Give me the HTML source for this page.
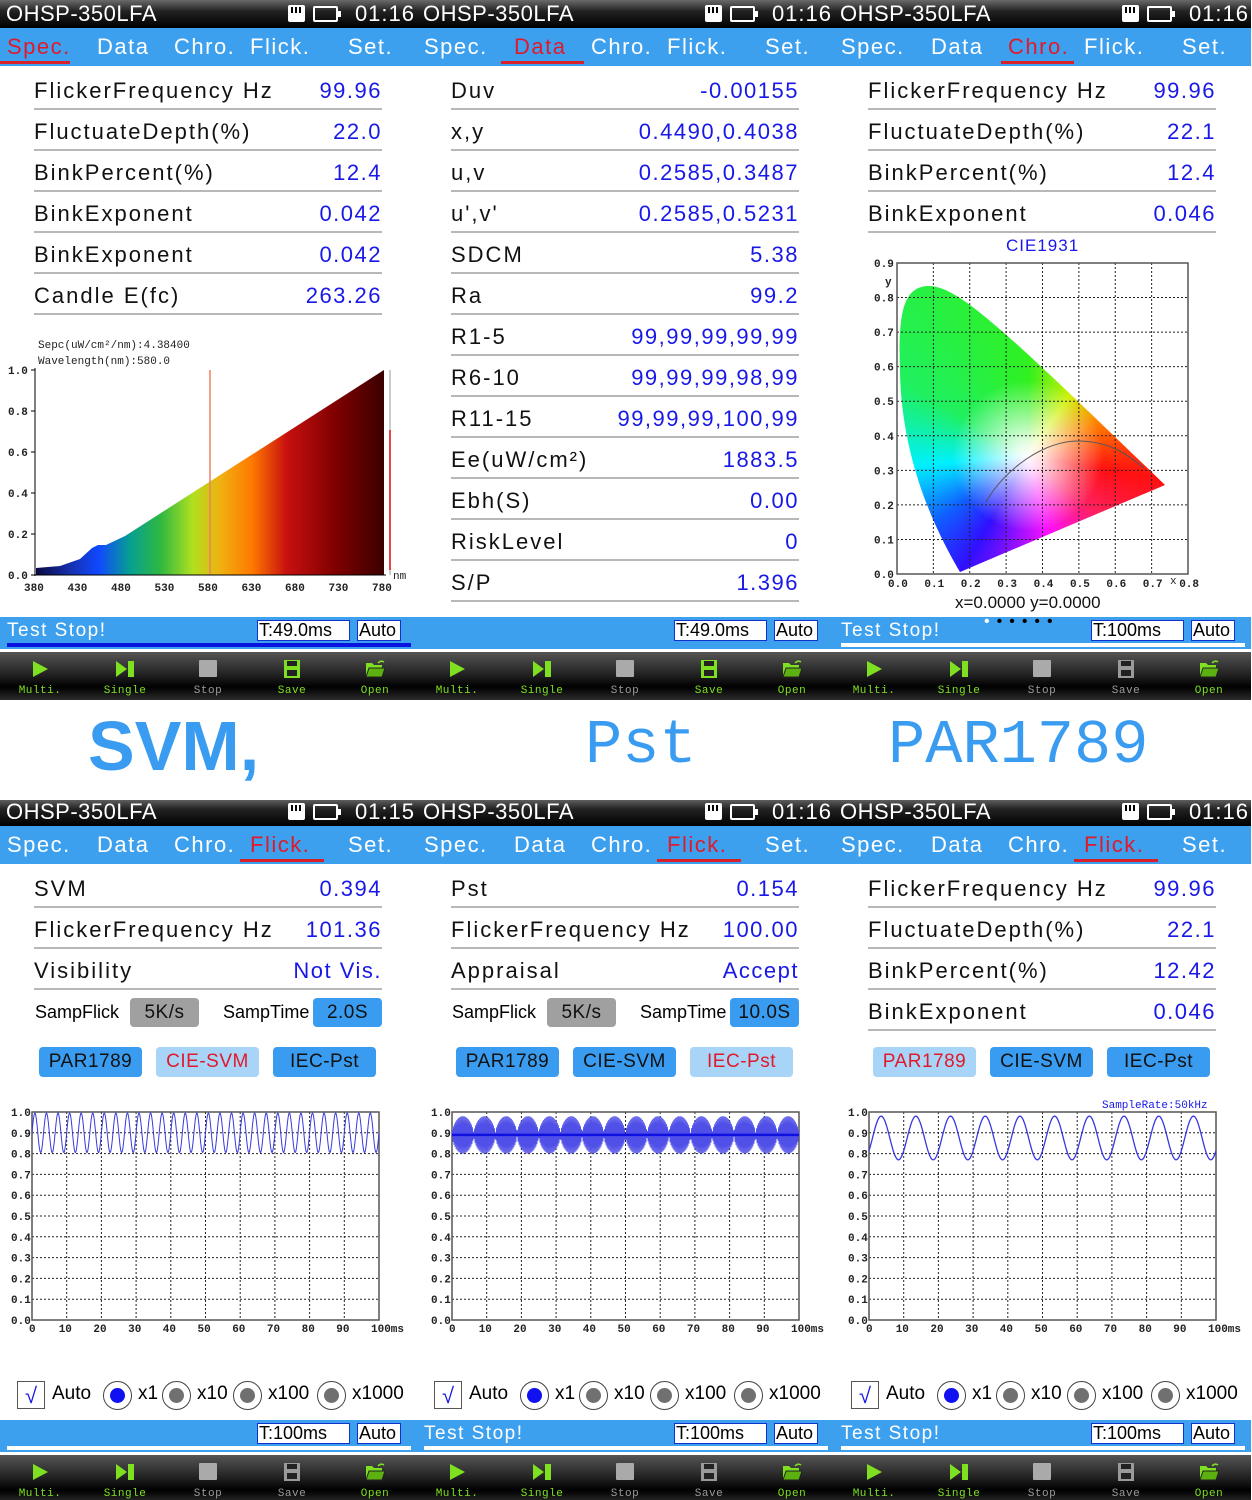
<!DOCTYPE html>
<html><head><meta charset="utf-8">
<style>
*{margin:0;padding:0;box-sizing:border-box}
body{width:1252px;height:1500px;position:relative;overflow:hidden;background:#fff;font-family:"Liberation Sans","Noto Sans CJK SC",sans-serif}
.p{position:absolute;width:417px;height:702px;overflow:hidden;background:#fff}
.sb{position:absolute;left:0;top:0;width:417px;height:28px;background:linear-gradient(#6a6a6a,#222 40%,#000);color:#fff;font-size:22px;line-height:28px;letter-spacing:0.5px}
.sb .n{position:absolute;left:6px}
.sb .t{position:absolute;right:2px;letter-spacing:1px}
.sd{position:absolute;left:288px;top:5px;width:17px;height:17px;background:#fff;border-radius:2px}
.sd:before{content:"";position:absolute;left:3px;top:2px;width:11px;height:6px;background:repeating-linear-gradient(90deg,#000 0 2px,#fff 2px 4px)}
.bt{position:absolute;left:313px;top:6px;width:25px;height:16px;border:2px solid #fff;border-radius:2px}
.bt:after{content:"";position:absolute;right:-5px;top:3px;width:3px;height:6px;background:#fff}
.tabs{position:absolute;left:0;top:28px;width:417px;height:38px;background:#3da0ee;color:#fff;font-size:22px;letter-spacing:1.5px}
.tabs span{position:absolute;top:6px}
.tabs .a{color:#e01a2a}
.ul{position:absolute;top:33px;height:3px;background:#d8202a}
.row{position:absolute;left:34px;width:348px;height:41px;border-bottom:2px solid #b8b8b8;font-size:22px;letter-spacing:2px;color:#111}
.row .l{position:absolute;left:0;top:9px;white-space:nowrap}
.row .v{position:absolute;right:0;top:9px;color:#1818e8;white-space:nowrap;letter-spacing:1.5px}
.st{position:absolute;left:0;top:617px;width:417px;height:32px;background:#3da0ee;color:#fff;font-size:19px;letter-spacing:1.5px}
.st .m{position:absolute;left:7px;top:3px}
.bx{position:absolute;top:3px;height:21px;background:#fff;border:1px solid #1030d0;color:#000;font-size:18px;line-height:19px;padding-left:1px;letter-spacing:0}
.ln{position:absolute;left:7px;top:26px;width:404px;height:4px}
.tb{position:absolute;left:0;top:652px;width:417px;height:50px;background:linear-gradient(#555,#222 45%,#000 70%,#333)}
.ic{position:absolute;top:8px;width:20px;height:18px}
.lb{position:absolute;top:33px;font-size:11px;width:60px;text-align:center;letter-spacing:0.5px;font-family:"Liberation Mono",monospace}
.g{color:#7ee020}.gr{color:#9a9a9a}
.btn{position:absolute;height:30px;border-radius:4px;font-size:19px;text-align:center;line-height:30px;letter-spacing:0.5px}
.ax{font-family:"Liberation Mono",monospace;font-size:11px;font-weight:bold;fill:#222}
</style></head><body>
<div id="root"></div>
<div style="position:absolute;left:0;top:700px;width:1252px;height:100px;background:#fff">
<div style="position:absolute;left:88px;top:6px;font-size:70px;font-weight:bold;color:#3a9cf0;font-family:'Liberation Sans',sans-serif">SVM,</div>
<div style="position:absolute;left:585px;top:10px;font-size:62px;color:#3a9cf0;font-family:'Liberation Mono',monospace">Pst</div>
<div style="position:absolute;left:888px;top:10px;font-size:62px;color:#3a9cf0;font-family:'Liberation Mono',monospace">PAR1789</div>
</div>
<script>
var R=document.getElementById('root');
function panel(x,y,tabIdx,time){
 var p=document.createElement('div');p.className='p';p.style.left=x+'px';p.style.top=y+'px';
 var tx=[7,97,174,250,348],tn=['Spec.','Data','Chro.','Flick.','Set.'],ux=[[0,70],[84,167],[167,240],[240,324],[0,0]];
 var h='<div class="sb"><span class="n">OHSP-350LFA</span><div class="sd"></div><div class="bt"></div><span class="t">'+time+'</span></div><div class="tabs">';
 for(var i=0;i<5;i++)h+='<span'+(i==tabIdx?' class="a"':'')+' style="left:'+tx[i]+'px">'+tn[i]+'</span>';
 h+='<div class="ul" style="left:'+ux[tabIdx][0]+'px;width:'+(ux[tabIdx][1]-ux[tabIdx][0])+'px"></div></div>';
 p.innerHTML=h;R.appendChild(p);return p;
}
function add(p,h){p.insertAdjacentHTML('beforeend',h)}
function rows(p,top,arr){var h='';arr.forEach(function(r,i){h+='<div class="row" style="top:'+(top+i*41)+'px"><span class="l">'+r[0]+'</span><span class="v">'+r[1]+'</span></div>'});add(p,h)}
function status(p,msg,t,lineCol,dots,dy){
 dy=dy||0;
 var h='<div class="st" style="top:'+(617+dy)+'px">'+(msg?'<span class="m">'+msg+'</span>':'')+(dots?'<span style="position:absolute;left:150px;top:-4px;font-size:16px;letter-spacing:7px;color:#000"><span style="color:#fff">•</span>•••••</span>':'')+
 '<div class="bx" style="left:257px;width:93px">'+t+'</div><div class="bx" style="left:357px;width:44px">Auto</div><div class="ln" style="background:'+lineCol+'"></div></div>';
 add(p,h);
}
function toolbar(p,saveGreen,dy){
 dy=dy||0;
 var cx=[40,125,208,292,375],lbs=['Multi.','Single','Stop','Save','Open'];
 var sc=saveGreen?'#7ee020':'#9a9a9a';
 var ic=[
 '<svg class="ic" viewBox="0 0 20 18"><path d="M3 1 L18 9 L3 17Z" fill="#7ee020"/></svg>',
 '<svg class="ic" viewBox="0 0 20 18"><path d="M1 1 L12 9 L1 17Z M13 1 h6 v16 h-6Z" fill="#7ee020"/></svg>',
 '<svg class="ic" viewBox="0 0 20 18"><rect x="1" y="0" width="18" height="17" rx="1" fill="#aaa"/></svg>',
 '<svg class="ic" viewBox="0 0 20 18"><path d="M2 0 h16 v18 h-16Z" fill="'+sc+'"/><rect x="5" y="1" width="10" height="5" fill="#222"/><rect x="5" y="10" width="10" height="6" fill="#222"/></svg>',
 '<svg class="ic" viewBox="0 0 20 18"><path d="M1 3 h6 l2 2 h8 v12 h-16Z" fill="#7ee020"/><path d="M4 8 h16 l-3 9 h-16Z" fill="#5cb010" stroke="#222" stroke-width="1"/><path d="M13 3 q3 -3 6 -1" stroke="#7ee020" fill="none" stroke-width="1.5"/></svg>'];
 var h='<div class="tb" style="top:'+(652+dy)+'px">';
 for(var i=0;i<5;i++){var c=(i==2)?'gr':(i==3&&!saveGreen)?'gr':'g';h+='<div style="position:absolute;left:'+(cx[i]-10)+'px;top:0">'+ic[i]+'</div><div class="lb '+c+'" style="left:'+(cx[i]-30)+'px">'+lbs[i]+'</div>'}
 add(p,h+'</div>');
}
function gridSvg(x0,y0,w,hgt,nx,ny){var s='';for(var i=1;i<nx;i++){var xx=x0+w*i/nx;s+='<line x1="'+xx+'" y1="'+y0+'" x2="'+xx+'" y2="'+(y0+hgt)+'" stroke="#222" stroke-dasharray="2,2" stroke-width="1"/>'}for(var j=1;j<ny;j++){var yy=y0+hgt*j/ny;s+='<line x1="'+x0+'" y1="'+yy+'" x2="'+(x0+w)+'" y2="'+yy+'" stroke="#222" stroke-dasharray="2,2" stroke-width="1"/>'}return s}

/* ===== Panel 1: Spec ===== */
var p1=panel(0,0,0,'01:16');
rows(p1,69,[['FlickerFrequency Hz','99.96'],['FluctuateDepth(%)','22.0'],['BinkPercent(%)','12.4'],['BinkExponent','0.042'],['BinkExponent','0.042'],['Candle E(fc)','263.26']]);
(function(){
 var s='<svg style="position:absolute;left:0;top:330px" width="417" height="270"><defs><linearGradient id="sp" x1="36" x2="384" gradientUnits="userSpaceOnUse">'+
 '<stop offset="0" stop-color="#0a0a40"/><stop offset="0.1" stop-color="#1530b0"/><stop offset="0.18" stop-color="#1048ff"/><stop offset="0.27" stop-color="#05a090"/><stop offset="0.36" stop-color="#30b840"/><stop offset="0.45" stop-color="#b0e020"/><stop offset="0.53" stop-color="#f0b010"/><stop offset="0.62" stop-color="#ff7a00"/><stop offset="0.72" stop-color="#c81010"/><stop offset="0.86" stop-color="#800000"/><stop offset="1" stop-color="#3a0000"/></linearGradient></defs>'+
 '<path d="M36 245 L36 238 L60 236 L80 229 L92 218 L98 215 L106 215 L125 206 L384 40 L384 245Z" fill="url(#sp)"/>'+
 '<line x1="210" y1="40" x2="210" y2="245" stroke="#f08060" stroke-width="1.5"/>'+
 '<line x1="390" y1="40" x2="390" y2="245" stroke="#bbb" stroke-width="1.5"/><line x1="390" y1="100" x2="390" y2="240" stroke="#f01010" stroke-width="1.5"/>'+
 '<line x1="35" y1="38" x2="35" y2="246" stroke="#000"/><line x1="35" y1="245" x2="386" y2="245" stroke="#000"/>';
 var yl=['1.0','0.8','0.6','0.4','0.2','0.0'];for(var i=0;i<6;i++){var yy=40+i*41;s+='<text class="ax" x="8" y="'+(yy+4)+'">'+yl[i]+'</text><line x1="31" y1="'+yy+'" x2="35" y2="'+yy+'" stroke="#000"/>'}
 var xl=['380','430','480','530','580','630','680','730','780'];for(var i=0;i<9;i++){s+='<text class="ax" x="'+(24+i*43.5)+'" y="261">'+xl[i]+'</text>'}
 s+='<text class="ax" x="393" y="249" style="font-weight:normal">nm</text>';
 s+='<text x="38" y="18" style="font-family:Liberation Mono,monospace;font-size:11px" fill="#222">Sepc(uW/cm²/nm):4.38400</text><text x="38" y="34" style="font-family:Liberation Mono,monospace;font-size:11px" fill="#222">Wavelength(nm):580.0</text></svg>';
 add(p1,s);
})();
status(p1,'Test Stop!','T:49.0ms','#0a14e0');toolbar(p1,true);

/* ===== Panel 2: Data ===== */
var p2=panel(417,0,1,'01:16');
rows(p2,69,[['Duv','-0.00155'],['x,y','0.4490,0.4038'],['u,v','0.2585,0.3487'],["u',v'",'0.2585,0.5231'],['SDCM','5.38'],['Ra','99.2'],['R1-5','99,99,99,99,99'],['R6-10','99,99,99,98,99'],['R11-15','99,99,99,100,99'],['Ee(uW/cm²)','1883.5'],['Ebh(S)','0.00'],['RiskLevel','0'],['S/P','1.396']]);
status(p2,'','T:49.0ms','#3da0ee');toolbar(p2,true);

/* ===== Panel 3: Chro ===== */
var p3=panel(834,0,2,'01:16');
rows(p3,69,[['FlickerFrequency Hz','99.96'],['FluctuateDepth(%)','22.1'],['BinkPercent(%)','12.4'],['BinkExponent','0.046']]);
(function(){
 var s='<div style="position:absolute;left:172px;top:236px;font-size:17px;color:#1818e8;letter-spacing:1px">CIE1931</div>';
 s+='<div style="position:absolute;left:63px;top:263px;width:291px;height:311px;clip-path:path(\'M63 309 C40 270 5 200 3 110 C1 50 6 25 30 23 C60 22 100 60 268 222 Z\');background:radial-gradient(circle at 45% 62%,#fff 0,rgba(255,255,255,0.85) 6%,rgba(255,255,255,0) 30%),conic-gradient(from 0deg at 45% 62%,#30f020 0deg,#d0f000 35deg,#ff8000 65deg,#ff1010 100deg,#ff2060 130deg,#ff10ff 165deg,#3010ff 210deg,#1060ff 235deg,#00f0ff 265deg,#20f060 300deg,#30f020 360deg)"></div>';
 s+='<svg style="position:absolute;left:0;top:240px" width="418" height="380">'+gridSvg(63,23,291,311,8,9)+'<rect x="63" y="23" width="291" height="311" fill="none" stroke="#555" stroke-width="1.5"/>'+
 '<path d="M152 262 C170 230 210 200 246 201 C275 202 290 212 310 228" stroke="#555" fill="none" stroke-width="1"/>';
 var yl=['0.9','0.8','0.7','0.6','0.5','0.4','0.3','0.2','0.1','0.0'];for(var i=0;i<10;i++){var yy=23+i*34.55;s+='<text class="ax" x="40" y="'+(yy+4)+'">'+yl[i]+'</text>'}
 s+='<text class="ax" x="51" y="45">y</text>';
 var xl=['0.0','0.1','0.2','0.3','0.4','0.5','0.6','0.7','0.8'];for(var i=0;i<9;i++){s+='<text class="ax" x="'+(54+i*36.4)+'" y="347">'+xl[i]+'</text>'}
 s+='<text class="ax" x="336" y="344" style="font-weight:normal">x</text>';
 s+='<text x="121" y="368" style="font-family:Liberation Sans,sans-serif;font-size:17px" fill="#111">x=0.0000  y=0.0000</text></svg>';
 add(p3,s);
})();
status(p3,'Test Stop!','T:100ms','#ffffff',true);toolbar(p3,false);

/* ===== Bottom panels ===== */
function flickChart(p,x0,kind){
 var y0=314,w=347,hg=208;
 var s='<svg style="position:absolute;left:0;top:0" width="417" height="560">'+gridSvg(x0,y0,w,hg,10,10)+'<rect x="'+x0+'" y="'+y0+'" width="'+w+'" height="'+hg+'" fill="none" stroke="#555" stroke-width="1.5"/>';
 var yl=['1.0','0.9','0.8','0.7','0.6','0.5','0.4','0.3','0.2','0.1','0.0'];for(var i=0;i<11;i++){s+='<text class="ax" x="'+(x0-21)+'" y="'+(y0+i*20.8+4)+'">'+yl[i]+'</text>'}
 var xl=['0','10','20','30','40','50','60','70','80','90','100ms'];for(var i=0;i<11;i++){s+='<text class="ax" x="'+(x0-3+i*34.7-(i>0?5:0))+'" y="'+(y0+hg+12)+'">'+xl[i]+'</text>'}
 var d='';function Y(v){return y0+(1-v)*hg}
 if(kind==1){for(var i=0;i<=w*2;i++){var xx=x0+i/2;var v=0.9+0.095*Math.sin(i/2/w*2*Math.PI*30);d+=(i?'L':'M')+xx.toFixed(1)+' '+Y(v).toFixed(1)}s+='<path d="'+d+'" stroke="#3838e0" fill="none" stroke-width="1"/>'}
 if(kind==2){for(var i=0;i<=w*2;i++){var xx=x0+i/2;var t=i/2/w;var env=Math.sqrt(Math.abs(Math.sin(t*Math.PI*16)));var v=0.89+0.09*env*(i%2?1:-1);d+=(i?'L':'M')+xx.toFixed(1)+' '+Y(v).toFixed(1)}s+='<path d="'+d+'" stroke="#5050e8" fill="none" stroke-width="0.8"/><line x1="'+x0+'" y1="'+Y(0.89)+'" x2="'+(x0+w)+'" y2="'+Y(0.89)+'" stroke="#1010e0" stroke-width="2.5"/>'}
 if(kind==3){for(var i=0;i<=w;i++){var xx=x0+i;var v=0.875+0.105*Math.sin(i/w*2*Math.PI*10-0.2*Math.PI);d+=(i?'L':'M')+xx.toFixed(1)+' '+Y(v).toFixed(1)}s+='<path d="'+d+'" stroke="#3838e0" fill="none" stroke-width="1.3"/><text x="268" y="310" style="font-family:Liberation Mono,monospace;font-size:11px" fill="#1818e8">SampleRate:50kHz</text>'}
 add(p,s+'</svg>');
}
function radioRow(p){
 var T=583;
 var h='<div style="position:absolute;left:17px;top:'+T+'px;width:28px;height:28px;border:1px solid #555;color:#1818e8;font-size:22px;text-align:center;line-height:28px">√</div><span style="position:absolute;left:52px;top:'+(T+2)+'px;font-size:19px">Auto</span>';
 var xs=[[103,'x1',1],[162,'x10',0],[233,'x100',0],[317,'x1000',0]];
 xs.forEach(function(r){h+='<div style="position:absolute;left:'+r[0]+'px;top:'+T+'px;width:29px;height:29px;border:1px solid #444;border-radius:50%"><div style="position:absolute;left:6px;top:6px;width:15px;height:15px;border-radius:50%;background:'+(r[2]?'#1010f0':'#707070')+'"></div></div><span style="position:absolute;left:'+(r[0]+35)+'px;top:'+(T+2)+'px;font-size:19px">'+r[1]+'</span>'});
 add(p,h);
}
function btns(p,act){
 var n=['PAR1789','CIE-SVM','IEC-Pst'],xs=[39,156,273],h='';
 for(var i=0;i<3;i++){h+='<div class="btn" style="left:'+xs[i]+'px;top:249px;width:103px;background:'+(i==act?'#a8d4f8':'#3a9cf0')+';color:'+(i==act?'#e01a2a':'#111')+'">'+n[i]+'</div>'}
 add(p,h);
}
function samp(p,t){
 add(p,'<span style="position:absolute;left:35px;top:204px;font-size:18px">SampFlick</span><div class="btn" style="left:130px;top:200px;width:69px;height:29px;line-height:29px;background:#a0a0a0;color:#111">5K/s</div><span style="position:absolute;left:223px;top:204px;font-size:18px">SampTime</span><div class="btn" style="left:313px;top:200px;width:69px;height:29px;line-height:29px;background:#3a9cf0;color:#111">'+t+'</div>');
}
var B=798;
var q1=panel(0,B,3,'01:15');
rows(q1,69,[['SVM','0.394'],['FlickerFrequency Hz','101.36'],['Visibility','Not Vis.']]);
samp(q1,'2.0S');btns(q1,1);flickChart(q1,32,1);radioRow(q1);status(q1,'','T:100ms','#ffffff',false,5);toolbar(q1,false,5);
var q2=panel(417,B,3,'01:16');
rows(q2,69,[['Pst','0.154'],['FlickerFrequency Hz','100.00'],['Appraisal','Accept']]);
samp(q2,'10.0S');btns(q2,2);flickChart(q2,35,2);radioRow(q2);status(q2,'Test Stop!','T:100ms','#ffffff',false,5);toolbar(q2,false,5);
var q3=panel(834,B,3,'01:16');
rows(q3,69,[['FlickerFrequency Hz','99.96'],['FluctuateDepth(%)','22.1'],['BinkPercent(%)','12.42'],['BinkExponent','0.046']]);
btns(q3,0);flickChart(q3,35,3);radioRow(q3);status(q3,'Test Stop!','T:100ms','#ffffff',false,5);toolbar(q3,false,5);
</script>
</body></html>
